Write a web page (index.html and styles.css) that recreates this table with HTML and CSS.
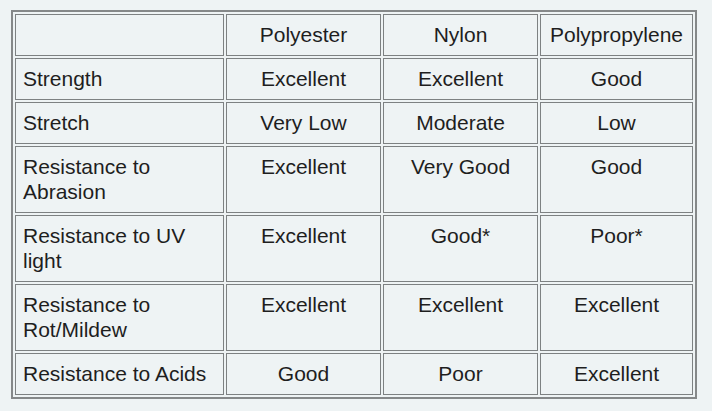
FILE: index.html
```html
<!DOCTYPE html>
<html>
<head>
<meta charset="utf-8">
<link rel="stylesheet" href="styles.css">
</head>
<body>
<table class="cmp">
  <colgroup>
    <col class="c1"><col class="c2"><col class="c3"><col class="c4">
  </colgroup>
  <tr><td class="lbl"></td><td>Polyester</td><td>Nylon</td><td>Polypropylene</td></tr>
  <tr><td class="lbl">Strength</td><td>Excellent</td><td>Excellent</td><td>Good</td></tr>
  <tr><td class="lbl">Stretch</td><td>Very Low</td><td>Moderate</td><td>Low</td></tr>
  <tr><td class="lbl">Resistance to Abrasion</td><td>Excellent</td><td>Very Good</td><td>Good</td></tr>
  <tr><td class="lbl">Resistance to UV light</td><td>Excellent</td><td>Good*</td><td>Poor*</td></tr>
  <tr><td class="lbl">Resistance to Rot/Mildew</td><td>Excellent</td><td>Excellent</td><td>Excellent</td></tr>
  <tr><td class="lbl">Resistance to Acids</td><td>Good</td><td>Poor</td><td>Excellent</td></tr>
</table>
</body>
</html>
```

FILE: styles.css
```css
html, body {
  margin: 0;
  background: #eef3f4;
}
body {
  padding: 10px 0 0 11px;
  font-family: "Liberation Sans", Arial, sans-serif;
  font-size: 21px;
  color: #1e1e1e;
}
.cmp {
  width: 686px;
  table-layout: fixed;
  border-collapse: separate;
  border-spacing: 2px;
  border: 2px solid #858889;
}
.c1 { width: 209px; }
.c2 { width: 155px; }
.c3 { width: 155px; }
.c4 { width: 153px; }
.cmp td {
  border: 1px solid #7d8182;
  padding: 7px 8px 8px;
  line-height: 25px;
  vertical-align: top;
  text-align: center;
  box-sizing: border-box;
}
.cmp td.lbl {
  text-align: left;
  padding-left: 7px;
}
```
